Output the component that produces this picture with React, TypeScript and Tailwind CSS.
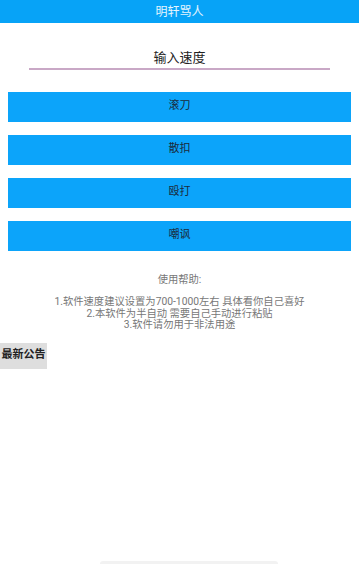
import React, { useState } from 'react';

const FONT = { fontFamily: '"Roboto", "Noto Sans CJK SC", sans-serif' };

const ACTIONS = ['滚刀', '散扣', '殴打', '嘲讽'];

const HELP_LINES = [
  '1.软件速度建议设置为700-1000左右 具体看你自己喜好',
  '2.本软件为半自动 需要自己手动进行粘贴',
  '3.软件请勿用于非法用途',
];

export default function App() {
  const [speed, setSpeed] = useState('');

  return (
    <div className="w-[359px] h-[564px] bg-white flex flex-col overflow-hidden" style={FONT}>
      {/* Title bar */}
      <div className="h-[23px] bg-[#07a3f7] flex items-center justify-center">
        <span className="text-[12px] text-white/90">明轩骂人</span>
      </div>

      {/* Speed input */}
      <div className="mt-[22px] px-[29px]">
        <input
          type="text"
          value={speed}
          onChange={(e) => setSpeed(e.target.value)}
          placeholder="输入速度"
          className="w-full h-[22px] text-center text-[13px] text-[#222] placeholder:text-[#222] border-b-[2px] border-[#c9a8c6] outline-none bg-transparent caret-[#c9a8c6]"
        />
      </div>

      {/* Action buttons */}
      <div className="mt-[22px] px-[8px] flex flex-col gap-[13px]">
        {ACTIONS.map((label) => (
          <button
            key={label}
            className="h-[30px] w-full bg-[#0ca4fa] text-[11px] text-[#1b2b3a] flex items-center justify-center"
          >
            {label}
          </button>
        ))}
      </div>

      {/* Help */}
      <div className="mt-[23px] flex flex-col items-center text-[10.3px] text-[#777] leading-[11.5px]">
        <p>使用帮助:</p>
        <div className="mt-[11px] flex flex-col items-center">
          {HELP_LINES.map((line) => (
            <p key={line}>{line}</p>
          ))}
        </div>
      </div>

      {/* Notice */}
      <div className="mt-[12px]">
        <button className="h-[26px] w-[47px] bg-[#dedede] text-[11px] font-bold text-[#222] flex items-center justify-center">
          最新公告
        </button>
      </div>

      <div className="flex-1" />
      <div className="pl-[100px]">
        <div className="w-[178px] h-[3px] bg-[#f2f2f2] rounded-t-sm" />
      </div>
    </div>
  );
}
